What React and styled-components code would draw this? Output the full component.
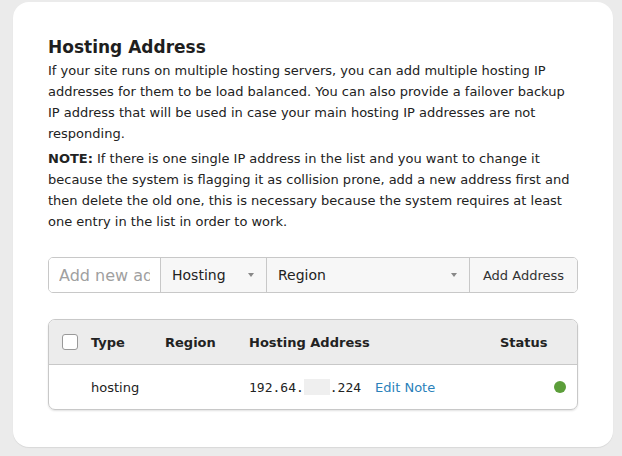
import React from "react";
import styled, { createGlobalStyle } from "styled-components";

const GlobalStyle = createGlobalStyle`
  html, body {
    margin: 0;
    padding: 0;
    background: #ebebeb;
    font-family: "DejaVu Sans", Verdana, sans-serif;
    color: #222;
  }
`;

function App() {
  return (
    <>
      <GlobalStyle />
      <Page>
        <Card>
          <Title>Hosting Address</Title>
          <Para>
            If your site runs on multiple hosting servers, you can add multiple
            hosting IP addresses for them to be load balanced. You can also
            provide a failover backup IP address that will be used in case your
            main hosting IP addresses are not responding.
          </Para>
          <Para>
            <b>NOTE:</b> If there is one single IP address in the list and you
            want to change it because the system is flagging it as collision
            prone, add a new address first and then delete the old one, this is
            necessary because the system requires at least one entry in the
            list in order to work.
          </Para>

          <InputGroup>
            <AddressInput type="text" placeholder="Add new address" />
            <Select $width="106px">
              <span>Hosting</span>
              <Caret />
            </Select>
            <Select $grow>
              <span>Region</span>
              <Caret />
            </Select>
            <AddButton type="button">Add Address</AddButton>
          </InputGroup>

          <Table>
            <HeadRow>
              <Cell $w="42px">
                <Checkbox />
              </Cell>
              <Cell $w="74px">Type</Cell>
              <Cell $w="84px">Region</Cell>
              <Cell $grow>Hosting Address</Cell>
              <Cell $w="77px">Status</Cell>
            </HeadRow>
            <BodyRow>
              <Cell $w="42px" />
              <Cell $w="74px">hosting</Cell>
              <Cell $w="84px" />
              <Cell $grow>
                <Ip>
                  192.64.<Masked />.224
                </Ip>
                <EditLink href="#">Edit Note</EditLink>
              </Cell>
              <Cell $w="77px" $end>
                <Dot />
              </Cell>
            </BodyRow>
          </Table>
        </Card>
      </Page>
    </>
  );
}

export default App;

const Page = styled.div`
  padding: 2px 9px 9px 13px;
  width: 600px;
`;

const Card = styled.section`
  background: #fff;
  border-radius: 16px;
  box-shadow: 0 1px 1px rgba(0, 0, 0, 0.08);
  padding: 33px 35px 37px;
`;

const Title = styled.h2`
  margin: 0 0 1px;
  font-size: 17px;
  font-weight: 700;
  line-height: 24px;
  color: #1e1e1e;
`;

const Para = styled.p`
  margin: 0 0 4px;
  font-size: 13px;
  line-height: 21px;
  color: #222;

  b {
    font-weight: 700;
  }
`;

const InputGroup = styled.div`
  display: flex;
  margin-top: 25px;
  height: 36px;
  border: 1px solid #c8c8c8;
  border-radius: 5px;
  overflow: hidden;
  box-sizing: border-box;
`;

const AddressInput = styled.input`
  width: 111px;
  box-sizing: border-box;
  border: none;
  outline: none;
  padding: 0 10px;
  font-family: "DejaVu Sans", sans-serif;
  font-size: 16px;
  color: #333;
  background: #fff;

  &::placeholder {
    color: #a0a0a0;
  }
`;

const Select = styled.div`
  display: flex;
  align-items: center;
  justify-content: space-between;
  box-sizing: border-box;
  width: ${(p) => p.$width || "auto"};
  flex: ${(p) => (p.$grow ? "1" : "none")};
  padding: 0 12px 0 11px;
  border-left: 1px solid #c8c8c8;
  background: #f7f7f7;
  font-size: 14px;
  color: #222;
`;

const Caret = styled.span`
  width: 0;
  height: 0;
  border-left: 3px solid transparent;
  border-right: 3px solid transparent;
  border-top: 4px solid #888;
`;

const AddButton = styled.button`
  width: 108px;
  border: none;
  border-left: 1px solid #c8c8c8;
  background: #f7f7f7;
  font-family: "DejaVu Sans", sans-serif;
  font-size: 13px;
  color: #333;
  padding: 0;
`;

const Table = styled.div`
  margin-top: 26px;
  border: 1px solid #c8c8c8;
  border-radius: 7px;
  overflow: hidden;
  box-shadow: 0 1px 2px rgba(0, 0, 0, 0.12);
`;

const HeadRow = styled.div`
  display: flex;
  align-items: center;
  height: 44px;
  background: #ececec;
  border-bottom: 1px solid #c8c8c8;
  font-size: 13px;
  font-weight: 700;
  color: #222;
`;

const BodyRow = styled.div`
  display: flex;
  align-items: center;
  height: 44px;
  font-size: 13px;
  color: #222;
`;

const Cell = styled.div`
  display: flex;
  align-items: center;
  box-sizing: border-box;
  width: ${(p) => p.$w || "auto"};
  flex: ${(p) => (p.$grow ? "1" : "none")};
  justify-content: ${(p) => (p.$end ? "flex-end" : "flex-start")};
  padding-right: ${(p) => (p.$end ? "11px" : "0")};

  &:first-child {
    padding-left: 13px;
  }
`;

const Checkbox = styled.span`
  width: 14px;
  height: 14px;
  border: 1px solid #999;
  border-radius: 3px;
  background: #fff;
`;

const Ip = styled.span`
  font-family: "DejaVu Sans Mono", monospace;
  font-size: 13px;
  color: #222;
  display: inline-flex;
  align-items: center;
`;

const Masked = styled.span`
  display: inline-block;
  width: 26px;
  height: 16px;
  background: #efefef;
`;

const EditLink = styled.a`
  margin-left: 14px;
  color: #2a81ba;
  text-decoration: none;
  font-size: 13px;
`;

const Dot = styled.span`
  width: 12px;
  height: 12px;
  border-radius: 50%;
  background: #5c9e3a;
`;
